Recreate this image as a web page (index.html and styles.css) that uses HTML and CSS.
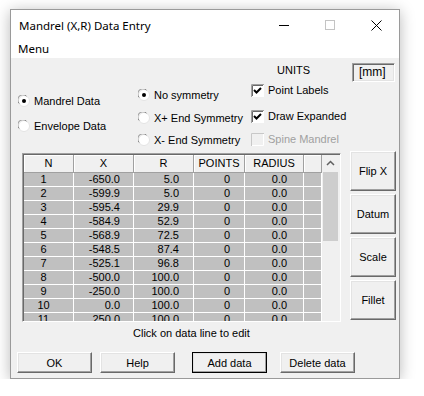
FILE: index.html
```html
<!doctype html>
<html lang="en">
<head>
  <meta charset="utf-8" />
  <title>Mandrel (X,R) Data Entry</title>
  <link rel="stylesheet" href="styles.css">
</head>
<body>
  <div class="window">
    <div class="titlebar">
      <span class="title">Mandrel (X,R) Data Entry</span>
      <div class="caption">
        <span class="cap-btn"><svg width="10" height="10" viewBox="0 0 10 10"><path d="M0 5.5h10" stroke="#000" stroke-width="1"/></svg></span>
        <span class="cap-btn"><svg width="10" height="10" viewBox="0 0 10 10"><rect x="0.5" y="0.5" width="9" height="9" fill="none" stroke="#c4c4c4"/></svg></span>
        <span class="cap-btn"><svg width="11" height="11" viewBox="0 0 11 11"><path d="M0.5 0.5l10 10M10.5 0.5l-10 10" stroke="#000" stroke-width="1"/></svg></span>
      </div>
    </div>
    <div class="menubar">Menu</div>

    <div class="client">
      <div class="options">
        <div class="col col-type">
          <label class="opt"><svg class="radio" viewBox="0 0 12 12"><circle cx="6" cy="6" r="5.5" fill="#fff" stroke="#e3e3e3"/><path d="M1.2 8.5A5 5 0 0 1 8.5 1.2" fill="none" stroke="#8a8a8a"/><circle cx="6" cy="6" r="2" fill="#000"/></svg>Mandrel Data</label>
          <label class="opt"><svg class="radio" viewBox="0 0 12 12"><circle cx="6" cy="6" r="5.5" fill="#fff" stroke="#e3e3e3"/><path d="M1.2 8.5A5 5 0 0 1 8.5 1.2" fill="none" stroke="#8a8a8a"/></svg>Envelope Data</label>
        </div>
        <div class="col col-sym">
          <label class="opt"><svg class="radio" viewBox="0 0 12 12"><circle cx="6" cy="6" r="5.5" fill="#fff" stroke="#e3e3e3"/><path d="M1.2 8.5A5 5 0 0 1 8.5 1.2" fill="none" stroke="#8a8a8a"/><circle cx="6" cy="6" r="2" fill="#000"/></svg>No symmetry</label>
          <label class="opt"><svg class="radio" viewBox="0 0 12 12"><circle cx="6" cy="6" r="5.5" fill="#fff" stroke="#e3e3e3"/><path d="M1.2 8.5A5 5 0 0 1 8.5 1.2" fill="none" stroke="#8a8a8a"/></svg>X+ End Symmetry</label>
          <label class="opt"><svg class="radio" viewBox="0 0 12 12"><circle cx="6" cy="6" r="5.5" fill="#fff" stroke="#e3e3e3"/><path d="M1.2 8.5A5 5 0 0 1 8.5 1.2" fill="none" stroke="#8a8a8a"/></svg>X- End Symmetry</label>
        </div>
        <div class="col col-flags">
          <div class="units-label">UNITS</div>
          <label class="opt chk-1"><svg class="check" viewBox="0 0 13 13"><rect x="0" y="0" width="13" height="13" fill="#fff"/><path d="M0.5 13V0.5H13" fill="none" stroke="#a0a0a0"/><path d="M1.5 12V1.5H12" fill="none" stroke="#696969"/><path d="M3 6l2.5 2.5L10 4" fill="none" stroke="#000" stroke-width="2"/></svg>Point Labels</label>
          <label class="opt chk-2"><svg class="check" viewBox="0 0 13 13"><rect x="0" y="0" width="13" height="13" fill="#fff"/><path d="M0.5 13V0.5H13" fill="none" stroke="#a0a0a0"/><path d="M1.5 12V1.5H12" fill="none" stroke="#696969"/><path d="M3 6l2.5 2.5L10 4" fill="none" stroke="#000" stroke-width="2"/></svg>Draw Expanded</label>
          <label class="opt chk-3 disabled"><svg class="check" viewBox="0 0 13 13"><rect x="0" y="0" width="13" height="13" fill="#f0f0f0"/><path d="M0.5 13V0.5H13" fill="none" stroke="#c8c8c8"/><path d="M12.5 1V12.5H1" fill="none" stroke="#fff"/></svg>Spine Mandrel</label>
        </div>
        <div class="col col-units">
          <div class="units-box">[mm]</div>
        </div>
      </div>

      <div class="data-row">
        <div class="grid-frame">
          <div class="grid">
            <div class="hd">N</div><div class="hd">X</div><div class="hd">R</div><div class="hd">POINTS</div><div class="hd">RADIUS</div><div class="hd"></div>
            <div class="c n">1</div><div class="c x">-650.0</div><div class="c r">5.0</div><div class="c p">0</div><div class="c rad">0.0</div><div class="c"></div>
            <div class="c n">2</div><div class="c x">-599.9</div><div class="c r">5.0</div><div class="c p">0</div><div class="c rad">0.0</div><div class="c"></div>
            <div class="c n">3</div><div class="c x">-595.4</div><div class="c r">29.9</div><div class="c p">0</div><div class="c rad">0.0</div><div class="c"></div>
            <div class="c n">4</div><div class="c x">-584.9</div><div class="c r">52.9</div><div class="c p">0</div><div class="c rad">0.0</div><div class="c"></div>
            <div class="c n">5</div><div class="c x">-568.9</div><div class="c r">72.5</div><div class="c p">0</div><div class="c rad">0.0</div><div class="c"></div>
            <div class="c n">6</div><div class="c x">-548.5</div><div class="c r">87.4</div><div class="c p">0</div><div class="c rad">0.0</div><div class="c"></div>
            <div class="c n">7</div><div class="c x">-525.1</div><div class="c r">96.8</div><div class="c p">0</div><div class="c rad">0.0</div><div class="c"></div>
            <div class="c n">8</div><div class="c x">-500.0</div><div class="c r">100.0</div><div class="c p">0</div><div class="c rad">0.0</div><div class="c"></div>
            <div class="c n">9</div><div class="c x">-250.0</div><div class="c r">100.0</div><div class="c p">0</div><div class="c rad">0.0</div><div class="c"></div>
            <div class="c n">10</div><div class="c x">0.0</div><div class="c r">100.0</div><div class="c p">0</div><div class="c rad">0.0</div><div class="c"></div>
            <div class="c n">11</div><div class="c x">250.0</div><div class="c r">100.0</div><div class="c p">0</div><div class="c rad">0.0</div><div class="c"></div>
          </div>
          <div class="scrollbar">
            <div class="arrow"><svg width="17" height="17" viewBox="0 0 17 17"><path d="M5 10l3.5-3.5L12 10" fill="none" stroke="#606060" stroke-width="1.5"/></svg></div>
            <div class="thumb"></div>
            <div class="track"></div>
            <div class="arrow"><svg width="17" height="17" viewBox="0 0 17 17"><path d="M5 7l3.5 3.5L12 7" fill="none" stroke="#606060" stroke-width="1.5"/></svg></div>
          </div>
        </div>
        <div class="side-btns">
          <button class="btn side">Flip X</button>
          <button class="btn side">Datum</button>
          <button class="btn side">Scale</button>
          <button class="btn side">Fillet</button>
        </div>
      </div>

      <div class="hint">Click on data line to edit</div>

      <div class="bottom-btns">
        <button class="btn wide">OK</button>
        <button class="btn wide help">Help</button>
        <button class="btn wide add default">Add data</button>
        <button class="btn wide del">Delete data</button>
      </div>
    </div>
  </div>
</body>
</html>
```

FILE: styles.css
```css
body{margin:0;background:#fff;font-family:"Liberation Sans",Arial,sans-serif;font-size:11px;color:#000}

.window{width:390px;height:370px;margin:9px 0 0 10px;box-sizing:border-box;border:1px solid #9a9a9a;background:#f0f0f0;box-shadow:0 2px 14px rgba(0,0,0,.28);display:flex;flex-direction:column}

.titlebar{height:30px;background:#fff;display:flex;align-items:center;justify-content:space-between}
.title{font-family:"Noto Sans","Liberation Sans",sans-serif;font-size:11.5px;padding-left:8px}
.caption{display:flex;height:30px}
.cap-btn{width:46px;height:30px;display:flex;align-items:center;justify-content:center}

.menubar{height:18px;background:#fff;font-family:"Noto Sans","Liberation Sans",sans-serif;font-size:11.5px;line-height:18px;padding-left:7px}

.client{height:320px;display:flex;flex-direction:column}

.options{height:93px;display:flex}
.col{display:flex;flex-direction:column}
.col-type{width:120px;padding:36px 0 0 7px;gap:11px}
.col-sym{width:113px;padding-top:30px;gap:8.5px}
.col-flags{width:101px}
.col-units{padding-top:5px}

.opt{display:flex;align-items:center;height:14px;white-space:nowrap}
.radio{width:12px;height:12px;margin-right:4px;flex:none}
.check{width:13px;height:13px;margin-right:4px;flex:none}
.disabled{color:#a0a0a0}

.units-label{margin:6px 0 0 26px;height:13px;line-height:13px}
.chk-1{margin-top:6px}
.chk-2{margin-top:12px}
.chk-3{margin-top:9px}

.units-box{width:43px;height:19px;box-sizing:border-box;border:1px solid;border-color:#a0a0a0 #fff #fff #a0a0a0;box-shadow:inset 1px 1px #696969,inset -1px -1px #e3e3e3;line-height:17px;padding-left:6px;font-size:12px}

.data-row{height:171px;display:flex}
.grid-frame{margin:2px 0 0 11px;width:319px;height:169px;box-sizing:border-box;border:1px solid;border-color:#a0a0a0 #fff #fff #a0a0a0;box-shadow:inset 1px 1px #696969;padding:1px 0 0 1px;display:flex;overflow:hidden}
.grid{display:grid;grid-template-columns:50px 60px 60px 51px 59px 18px;grid-auto-rows:14px;grid-template-rows:18px;width:298px;align-content:start;overflow:hidden}
.hd{background:#f0f0f0;box-sizing:border-box;border-right:1px solid #a0a0a0;border-bottom:1px solid #a0a0a0;box-shadow:inset 1px 1px #fff;text-align:center;line-height:17px}
.c{background:#c0c0c0;box-sizing:border-box;border-right:1px solid #fff;border-bottom:1px solid #fff;line-height:13px;white-space:nowrap}
.n{text-align:center;padding-right:10px}
.x{text-align:right;padding-right:13px}
.r{text-align:right;padding-right:14px}
.p{text-align:center;padding-left:16px}
.rad{text-align:center;padding-left:11px}

.scrollbar{width:17px;background:#f0f0f0;display:flex;flex-direction:column;height:182px;flex:none}
.arrow{height:17px}
.thumb{height:69px;background:#cdcdcd;margin:0 1px}
.track{flex:1}

.side-btns{margin-left:9px;display:flex;flex-direction:column;gap:3px}
.btn{font-family:"Liberation Sans",Arial,sans-serif;font-size:11px;color:#000;background:#f0f0f0;box-sizing:border-box;border:1px solid;border-color:#fff #696969 #696969 #fff;box-shadow:inset -1px -1px #a0a0a0,inset 1px 1px #e3e3e3;padding:0;margin:0}
.side{width:46px;height:40px}

.hint{height:22px;line-height:22px;padding-left:122px}

.bottom-btns{display:flex;margin-top:8px;padding-left:6px}
.wide{width:75px;height:21px}
.help{margin-left:8px}
.add{margin-left:17px}
.del{margin-left:13px}
.default{outline:1px solid #000;outline-offset:-1px;border-color:#fff #000 #000 #fff}
```
